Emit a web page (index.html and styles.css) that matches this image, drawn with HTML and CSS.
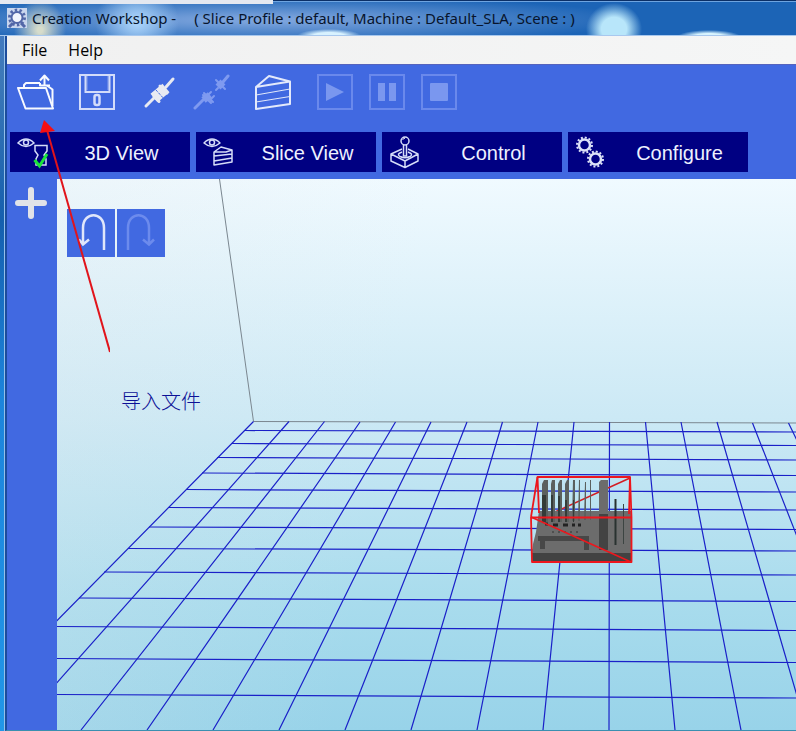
FILE: index.html
```html
<!DOCTYPE html>
<html lang="en">
<head>
<meta charset="utf-8">
<title>Creation Workshop</title>
<link rel="stylesheet" href="styles.css">
</head>
<body>
<div class="window">
  <header class="titlebar">
    <svg class="app-icon" viewBox="0 0 20 20" aria-hidden="true">
      <rect width="20" height="20" fill="#c9d6ee"/>
      <circle cx="10" cy="9.500" r="7.500" fill="none" stroke="#5267a8" stroke-width="3" stroke-dasharray="2.400 2.300"/>
      <circle cx="10" cy="9.500" r="5.500" fill="#f2f5fd" stroke="#5267a8" stroke-width="2"/>
      <path d="M2 19l4-4M18 19l-4-4" stroke="#5267a8" stroke-width="3"/>
    </svg>
    <h1 class="title"><span>Creation Workshop -</span><span>( Slice Profile : default, Machine : Default_SLA, Scene : )</span></h1>
  </header>
  <div class="frame">
    <nav class="menubar">
      <button type="button">File</button>
      <button type="button">Help</button>
    </nav>
    <div class="toolbar">
      <div class="tools">
        <div class="group">
          <button type="button" aria-label="Open file">
            <svg viewBox="0 0 38 38"><g fill="none" stroke="#f8faff" stroke-width="2" stroke-linejoin="round"><path d="M2 16H30L37 36.500H9.500Z"/><path d="M8 16V13L10 11H24M31 13.500L36.500 17.500V34"/><path d="M28.500 14V5M24 8.500L28.500 3.500L33 8.500"/><path d="M24 11V13.500H34"/></g></svg>
          </button>
        </div>
        <div class="group">
          <button type="button" aria-label="Save">
            <svg viewBox="0 0 38 38"><g fill="none" stroke="#d3dcfa" stroke-width="2"><rect x="2" y="3" width="34" height="34"/><path d="M7.500 3V20H31.500V3"/><rect x="16.500" y="23" width="5" height="10" rx="2" stroke-width="2.500"/><path d="M9 4V18M30 4V18" stroke-width="1" opacity=".5"/></g></svg>
          </button>
        </div>
        <div class="group">
          <button type="button" aria-label="Connect">
            <svg viewBox="0 0 38 38"><g stroke="#e8eaf2" stroke-linecap="round" fill="none"><path d="M6 34L14 26M26 15L33 7" stroke-width="3"/><path d="M14 24.500L19 29.500M20 14L27 21" stroke-width="3"/><path d="M14 26L26 16" stroke-width="11" stroke-linecap="butt"/><path d="M16 18L25 28" stroke="#4169e1" stroke-width="1" stroke-dasharray="2 2"/></g></svg>
          </button>
          <button type="button" aria-label="Disconnect" disabled>
            <svg viewBox="0 0 38 38"><g stroke="#7f9af0" stroke-linecap="round" fill="none"><path d="M3 36L11 28M31 10L36 4" stroke-width="3"/><path d="M11 23L19 31M12 21L21 30M24 8L33 17" stroke-width="2"/><path d="M11.500 28L18 23M26 15L31 10" stroke-width="7" stroke-linecap="butt"/><path d="M15 24L19 20M19 27L22 24M24 18L26 16" stroke-width="2"/></g></svg>
          </button>
        </div>
        <div class="group">
          <button type="button" aria-label="Slice">
            <svg viewBox="0 0 38 38"><g fill="none" stroke="#e3e9fb" stroke-width="2" stroke-linejoin="round"><path d="M2 15L15 4L36 9.500V32L2 37ZM2 15L36 9.500"/><path d="M2 23L36 17M2 30L36 24.500" stroke-width="1"/></g></svg>
          </button>
        </div>
        <div class="group">
          <button type="button" aria-label="Start print" disabled>
            <svg viewBox="0 0 38 38"><rect x="2" y="3" width="34" height="34" fill="none" stroke="#6a89ec" stroke-width="2"/><path d="M10 11V29L28 20Z" fill="#7a97ef"/></svg>
          </button>
          <button type="button" aria-label="Pause print" disabled>
            <svg viewBox="0 0 38 38"><rect x="2" y="3" width="34" height="34" fill="none" stroke="#6a89ec" stroke-width="2"/><path d="M10 11H17V29H10ZM21 11H28V29H21Z" fill="#7a97ef"/></svg>
          </button>
          <button type="button" aria-label="Stop print" disabled>
            <svg viewBox="0 0 38 38"><rect x="2" y="3" width="34" height="34" fill="none" stroke="#6a89ec" stroke-width="2"/><rect x="10" y="11" width="18" height="18" rx="1" fill="#7a97ef"/></svg>
          </button>
        </div>
      </div>
      <div class="tabs">
        <button type="button">
          <svg viewBox="0 0 40 40"><g fill="none" stroke="#d5dcf8" stroke-width="1.500"><path d="M8 11Q16 3 24 11Q16 18 8 11Z"/><circle cx="16" cy="10.500" r="2.500"/><path d="M25 13.500H37V19L34 23L36 27V33H26V27L28 23L25 19Z"/></g><path d="M24.500 28L29.500 34L37 22" fill="none" stroke="#19e339" stroke-width="3"/></svg>
          <span>3D View</span>
        </button>
        <button type="button">
          <svg viewBox="0 0 40 40"><g fill="none" stroke="#d5dcf8" stroke-width="1.500" stroke-linejoin="round"><path d="M8 11Q16 3 24 11Q16 18 8 11Z"/><circle cx="16" cy="10.500" r="2.500"/><path d="M18 20L25 15L36 18V30L18 33ZM18 20H30L36 18M18 24L36 22M18 29L36 26"/></g></svg>
          <span>Slice View</span>
        </button>
        <button type="button">
          <svg viewBox="0 0 40 40"><g fill="none" stroke="#d5dcf8" stroke-width="1.500" stroke-linejoin="round"><circle cx="23" cy="9" r="4"/><path d="M21.500 13V24H24.500V13"/><path d="M20 17L9 22L23 29L36 22L26 17M9 22V29L23 35.500L36 29V22M23 29V35"/><path d="M20 20Q14 22 18 24.500Q23 27 28 24.500Q32 22 26 20"/></g><path d="M20.500 7.500L23 6" stroke="#fff"/></svg>
          <span>Control</span>
        </button>
        <button type="button">
          <svg viewBox="0 0 40 40"><g fill="none" stroke="#dce2f8"><circle cx="16.500" cy="13" r="5.500" stroke-width="2.500"/><circle cx="16.500" cy="13" r="7.500" stroke-width="2" stroke-dasharray="2 1.930"/><circle cx="27.500" cy="27" r="5.500" stroke-width="2.500"/><circle cx="27.500" cy="27" r="7.500" stroke-width="2" stroke-dasharray="2 1.930"/></g></svg>
          <span>Configure</span>
        </button>
      </div>
    </div>
    <div class="workspace">
      <aside class="sidebar">
        <button type="button" aria-label="Add">
          <svg viewBox="0 0 32 32"><path d="M16 3V29M3 16H29" stroke="#e1e3e8" stroke-width="6" stroke-linecap="round"/></svg>
        </button>
      </aside>
      <main class="scene">
        <svg class="canvas" viewBox="57 179 739 551" preserveAspectRatio="xMinYMin slice" aria-label="Build platform">
          <path d="M219.500 179L253.500 421.500L796 423" fill="none" stroke="#7b8790"/>
          <g fill="none" stroke="#1a20c8" stroke-width="1.200">
            <path d="M253.500 421.500L-51 730M289 421.500L15 730M324.500 421.500L81 730M360 422L147 730M395.500 422L213 730M431 422L279 730M467 422L345 730M502.500 422L411 730M538 422L477 730M574 422L543 730M609.500 422L609 730M645.500 422L675 730M681 422L741 730M717 422L807 730M752.500 423L873 730M788.500 423L939 730"/>
            <path d="M245 430.500L796 432M232 443.500L796 445.500M217 457.500L796 460M202 473L796 475.500M186 489.500L796 492M168 507.500L796 510M149 527L796 529.500M128 548.500L796 551M104 572L796 575M79 598L796 601.500M57 626.500L796 630.500M57 658.500L796 662.500M57 694.500L796 698"/>
          </g>
          <path d="M630 478L555 512" stroke="#d31d22" stroke-width="1.500"/>
          <path d="M539 511H631V553H532L533 544L536 532Z" fill="#6c6c6c"/>
          <path d="M532 553H631V562H532Z" fill="#424242"/>
          <path d="M544 480H548V522H542V484ZM552 480H555V522H551V484ZM560 480H562V522H558V484ZM567 480H569V522H565V484ZM573 480H575V521H572ZM579 480H580V521H578ZM585 482H586V520H584ZM590 480H591V520H590Z" fill="#5b605e"/>
          <path d="M542 495H546V522H542ZM551 495H553V522H551ZM558 496H560V522H558ZM565 500H567V522H565ZM573 500H574V522H573Z" fill="#343b38"/>
          <path d="M599 482L601 480H608V514H599Z" fill="#6c6c6c"/>
          <path d="M599 514H608V550H599Z" fill="#434343"/>
          <path d="M538 536H589V550H584V541H545V549H540V541H538Z" fill="#474747"/>
          <path d="M545 524H548M553 525H558M563 525H568M572 525H575M578 525H581" stroke="#222" stroke-width="3"/>
          <path d="M552 532H580" stroke="#333" stroke-dasharray="2 4"/>
          <path d="M615.500 499V545" stroke="#293230" stroke-width="2"/>
          <path d="M623.500 504V544" stroke="#3c4442"/>
          <g fill="none" stroke="#ed171d" stroke-width="1.800" stroke-linejoin="round"><path d="M531 517L537.500 477H630L631.500 517.500H531L532 562H631.500V517.500"/><path d="M537.500 477L539 513M630 477L629 514"/><path d="M531 517L631 562" stroke-width="1.500"/></g>
        </svg>
        <div class="history">
          <button type="button" aria-label="Undo"><svg viewBox="0 0 48 48"><path d="M37 41V19C37 2 16 2 16 19V34M12 30.500L16 35.500L22 30.500" fill="none" stroke="#e0e6fa" stroke-width="2.500"/></svg></button>
          <button type="button" aria-label="Redo" disabled><svg viewBox="0 0 48 48"><path d="M11 41V19C11 2 32 2 32 19V34M26 30.500L32 35.500L37 30.500" fill="none" stroke="#6c8bed" stroke-width="2.500"/></svg></button>
        </div>
        <p class="note" lang="zh-CN">导入文件</p>
      </main>
    </div>
  </div>
  <svg class="pointer" viewBox="0 0 80 240" aria-hidden="true"><path d="M17 10L80 232" stroke="#e1141b" stroke-width="2"/><path d="M14 0L10 13L25 11Z" fill="#f50f12"/></svg>
</div>
</body>
</html>
```
FILE: styles.css
```css
* {
  box-sizing: border-box;
}

body {
  margin: 0;
  font-family: "Open Sans", "Noto Sans", sans-serif;
}

button {
  margin: 0;
  padding: 0;
  border: 0;
  background: none;
  color: inherit;
  font: inherit;
}

svg {
  display: block;
}

.window {
  position: relative;
  display: flex;
  flex-direction: column;
  min-height: 100vh;
  overflow: hidden;
  background: linear-gradient(#4a7cc4 0, #3c78b8 80px, #155fae 220px, #1c84dc 400px, #2196e8 100%);
}

.titlebar {
  display: flex;
  align-items: center;
  gap: 5px;
  height: 36px;
  padding: 0 7px;
  border-bottom: 1px solid #a8c8ee;
  background:
    linear-gradient(#e4e8f0, #e4e8f0) 0 0 / 273px 4px no-repeat,
    linear-gradient(#0b2f66, #0b2f66) 0 0 / 100% 1px no-repeat,
    linear-gradient(#6ea4e0, #6ea4e0) 0 1px / 100% 1px no-repeat,
    radial-gradient(ellipse 26px 30px at 40px 30px, #d6dccb 10%, transparent),
    radial-gradient(ellipse 42px 36px at 137px 22px, #a6d0f8 10%, transparent),
    radial-gradient(ellipse 32px 7px at 329px 36px, #d8f2ff 50%, transparent),
    radial-gradient(ellipse 28px 26px at 614px 29px, #b8e6fa 45%, transparent),
    radial-gradient(ellipse 32px 7px at 709px 37px, #d8f4ff 50%, transparent),
    radial-gradient(ellipse 380px 24px at 260px 20px, #7ba3dc 10%, transparent),
    #1c64b6;
}

.app-icon {
  width: 20px;
  height: 20px;
}

.title {
  display: flex;
  gap: 18px;
  margin: 0;
  color: #07142c;
  font-family: "Noto Sans", sans-serif;
  font-size: 15px;
  font-weight: 400;
  line-height: 24px;
  white-space: nowrap;
}

.frame {
  display: flex;
  flex: 1;
  flex-direction: column;
  margin-left: 5px;
  border-left: 2px solid #1c4c9c;
  border-bottom: 1px solid #3a8fb0;
  box-shadow: -1px 0 #94c0ea;
}

.menubar {
  display: flex;
  gap: 21px;
  height: 28px;
  padding: 0 15px;
  background: linear-gradient(90deg, #f0f0f0, #f5f6f6);
  font-size: 16px;
  line-height: 28px;
}

.toolbar {
  display: flex;
  flex-direction: column;
  gap: 22px;
  padding: 7px 3px;
  border-top: 1px solid #5563bd;
  background: #4169e1;
}

.tools {
  display: flex;
  gap: 24px;
  padding: 0 6px;
}

.group {
  display: flex;
  gap: 14px;
}

.group button,
.group svg {
  width: 38px;
  height: 38px;
}

.tabs {
  display: flex;
  gap: 6px;
}

.tabs button {
  display: flex;
  align-items: center;
  gap: 3px;
  width: 180px;
  height: 40px;
  background: #000082;
  color: #eef1ff;
  font-family: "Liberation Sans", sans-serif;
  font-size: 20px;
}

.tabs svg {
  flex: none;
  width: 40px;
  height: 40px;
}

.tabs span {
  flex: 1;
  padding-top: 2px;
}

.workspace {
  display: flex;
  flex: 1;
}

.sidebar {
  width: 50px;
  padding: 8px;
  background: #4169e1;
}

.sidebar svg {
  width: 32px;
  height: 32px;
}

.scene {
  position: relative;
  flex: 1;
  padding: 30px 10px;
  background:
    linear-gradient(100deg, rgba(225, 232, 236, .25), transparent 45%),
    linear-gradient(#f0faff, #cce9f5 43%, #a9dced 76%, #98d3e9);
}

.canvas {
  position: absolute;
  inset: 0;
  width: 100%;
  height: 100%;
}

.history {
  position: relative;
  display: flex;
  gap: 2px;
}

.history button,
.history svg {
  width: 48px;
  height: 48px;
}

.history button {
  background: #4169e1;
}

.note {
  position: absolute;
  top: 208px;
  left: 64px;
  margin: 0;
  color: #0c1196;
  font-family: "Noto Sans CJK SC", sans-serif;
  font-size: 20px;
  font-weight: 300;
  line-height: 28px;
}

.pointer {
  position: absolute;
  top: 120px;
  left: 30px;
  width: 80px;
  height: 240px;
}
```
